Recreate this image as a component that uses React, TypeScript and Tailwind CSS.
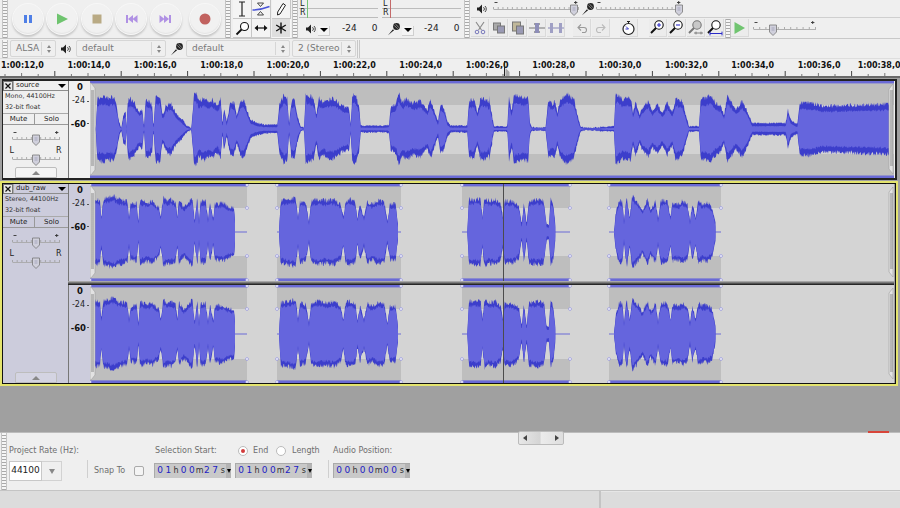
import React from "react";

const F = "font-['DejaVu_Sans',sans-serif]";

/* ---------- waveform data: [x, top y] pairs read from the picture, as 3x crop coords ---------- */
const T1A = [35,153,40,60,60,55,75,62,90,55,97,80,105,130,112,150,118,110,125,105,128,150,130,85,135,60,150,72,165,100,175,95,180,150,185,65,198,68,205,90,208,150,215,55,228,55,235,110,240,105,245,85,260,75,275,105,295,125,310,145,322,150,330,50,336,45,345,70,360,60,372,70,385,65,400,85,410,60,415,140,420,90,428,130,440,70,450,75,458,110,470,70,480,68,490,100,500,125,520,135,540,140,580,140,586,80,600,50,610,60,615,140,622,70,632,65,640,115,650,145,660,150,665,50,680,55,690,65,697,110,705,60,718,75,730,65,745,62,760,70,775,85,795,90,800,140,805,50,815,50,825,85,830,143,900,143,915,140,920,90,935,80,945,45,955,75,965,60,985,75,1010,70,1030,95,1040,65,1055,110,1062,130,1070,80,1080,90,1090,130,1100,143,1150,143,1155,70,1170,65,1180,105,1190,60,1210,65,1225,110];
const T1B = [0,60,10,120,15,145,55,145,60,60,68,100,75,50,90,55,105,60,118,55,122,130,128,148,170,148,178,65,190,80,197,65,205,105,212,70,220,60,235,47,255,65,265,110,275,145,290,150,375,145,380,45,400,65,425,60,432,105,440,70,452,110,460,90,478,70,490,100,505,80,520,105,535,75,550,105,560,60,580,70,590,110,600,145,630,145,635,65,650,60,665,55,680,75,695,85,705,110,715,55,730,75,740,95,760,70,775,100,790,135,890,135,897,95,905,125,925,140,932,75,970,75,1000,85,1200,78];
const C1 = [30,55,40,55,48,60,52,110,58,55,70,50,90,45,105,55,130,62,135,110,140,70,158,65,163,125,168,58,190,65,205,60,225,80,230,110,238,50,248,60,260,55,275,65,280,110,285,60,300,80,325,50,332,120,340,50,345,120,350,60,365,60,372,115,378,65,388,115,392,70,415,65,430,75,450,80,454,130];
const C2 = [585,150,590,60,610,55,635,50,642,110,648,60,665,65,675,120,682,60,700,55,725,60,750,55,770,70,778,110,785,60,800,55,815,65,820,115,828,70,840,110,850,60,865,70,880,60,900,60,910,120,918,70,935,70,942,130];
const C3 = [40,150,45,55,60,55,80,55,85,110,92,50,105,60,125,55,140,70,147,110,152,60,175,60,195,75,203,130,210,65,218,130,225,60,250,55,270,60,278,130,285,130,290,55,298,70,305,140];
const C4 = [480,150,485,100,495,60,505,60,510,120,518,48,527,110,535,45,555,70,565,90,580,55,590,85,605,60,612,115,620,60,640,60,650,110,655,65,675,70,685,60,700,70,708,120,715,70,725,110,733,60,745,70,760,65,775,80,785,130];

type Seg = { pts: number[]; x0: number };

function rng(seed: number) {
  let s = seed;
  return () => {
    s = (s * 1664525 + 1013904223) % 4294967296;
    return s / 4294967296;
  };
}

function wavePaths(segs: Seg[], cy: number, seed: number, body: number) {
  const r = rng(seed);
  let peak = "";
  let rms = "";
  for (const seg of segs) {
    const pts: [number, number][] = [];
    for (let i = 0; i < seg.pts.length; i += 2) {
      pts.push([seg.x0 + seg.pts[i] / 3, (153 - seg.pts[i + 1]) / 3]);
    }
    const start = pts[0][0];
    const end = pts[pts.length - 1][0];
    const up: [number, number][] = [];
    const lo: [number, number][] = [];
    const ru: [number, number][] = [];
    const rl: [number, number][] = [];
    let k = 0;
    for (let x = start; x <= end; x += 0.5) {
      while (k < pts.length - 2 && pts[k + 1][0] < x) k++;
      const [a, ha] = pts[k];
      const [b, hb] = pts[k + 1];
      const h = ha + ((hb - ha) * (x - a)) / Math.max(b - a, 0.01);
      const spread = Math.min(5, 1 + h * 0.14);
      const j1 = (r() - 0.5) * spread;
      const j2 = (r() - 0.5) * spread;
      const t = Math.min(1, h / 16);
      const f = 0.3 + (body - 0.3) * t;
      const j3 = (r() - 0.5) * Math.min(3.5, h * 0.1);
      const j4 = (r() - 0.5) * Math.min(3.5, h * 0.1);
      up.push([x, cy - h - j1]);
      lo.push([x, cy + h + j2]);
      ru.push([x, cy - h * f - j3]);
      rl.push([x, cy + h * f + j4]);
    }
    const toD = (u: [number, number][], l: [number, number][]) =>
      "M" + u.concat(l.slice().reverse()).map((p) => p[0].toFixed(1) + " " + p[1].toFixed(1)).join("L") + "Z";
    peak += toD(up, lo);
    rms += toD(ru, rl);
  }
  return { peak, rms };
}

function ClipHandle({ x, y, h, flip }: { x: number; y: number; h: number; flip?: boolean }) {
  const ticks = [];
  for (let i = 8; i < h - 8; i += 2) {
    ticks.push(<path key={i} d={`M${x + 1} ${y + i}h3`} stroke="#777" strokeWidth="0.8" />);
  }
  return (
    <g>
      <path d={flip ? `M${x} ${y + 6}l4 -5v${h - 2}l-4 -5z` : `M${x} ${y}h1l4 5v${h - 10}l-4 5h-1z`} fill="#e2e2e2" stroke="#a0a0a0" strokeWidth="0.6" />
      {ticks}
    </g>
  );
}

function Source() {
  const w = wavePaths([{ pts: T1A, x0: 85 }, { pts: T1B, x0: 490 }], 129, 7, 0.76);
  return (
    <svg className="block" width={804} height={97} viewBox="91 81 804 97">
      <rect x="91" y="81" width="804" height="97" fill="#bebebe" />
      <rect x="91" y="105" width="804" height="49" fill="#d2d2d2" />
      <rect x="91" y="81" width="804" height="2.4" fill="#6a6ad6" />
      <rect x="91" y="175.5" width="804" height="2.5" fill="#6a6ad6" />
      <path d={w.peak} fill="#3c3ecb" />
      <path d={w.rms} fill="#6565dd" />
      <ClipHandle x={91} y={83} h={92} />
      <ClipHandle x={890} y={83} h={92} flip />
    </svg>
  );
}

const CLIPS = [
  [91, 248],
  [278, 402],
  [463, 571],
  [610, 722],
];

function Channel({ top, h, cy, seed, bandTop, bandBottom }: { top: number; h: number; cy: number; seed: number; bandTop: number; bandBottom: number }) {
  const w = wavePaths(
    [
      { pts: C1, x0: 85 },
      { pts: C2, x0: 85 },
      { pts: C3, x0: 455 },
      { pts: C4, x0: 455 },
    ],
    cy,
    seed,
    0.86
  );
  return (
    <svg className="block" width={804} height={h} viewBox={`91 ${top} 804 ${h}`}>
      <rect x="91" y={top} width="804" height={h} fill="#d4d4d4" />
      {CLIPS.map(([a, b]) => (
        <g key={a}>
          <rect x={a} y={top} width={b - a} height={h} fill="#bebebe" />
          <rect x={a} y={bandTop} width={b - a} height={bandBottom - bandTop} fill="#d4d4d4" />
          <rect x={a} y={top} width={b - a} height="2.4" fill="#6a6ad6" />
          <rect x={a} y={top + h - 2.6} width={b - a} height="2.6" fill="#6a6ad6" />
          <rect x={a} y={cy - 0.5} width={b - a} height="1" fill="#6a6ad6" />
          {[a, b].map((p) =>
            [top + 1, bandTop, bandBottom, top + h - 1].map((q) => (
              <circle key={p + "-" + q} cx={p} cy={q} r="1.4" fill="#fff" stroke="#7a7ad8" strokeWidth="0.6" />
            ))
          )}
        </g>
      ))}
      <path d={w.peak} fill="#3c3ecb" />
      <path d={w.rms} fill="#6565dd" />
      <ClipHandle x={91} y={top + 2} h={h - 5} />
      <ClipHandle x={890} y={top + 2} h={h - 5} flip />
      <rect x="504" y={top} width="1" height={h} fill="#4c4c4c" />
    </svg>
  );
}

/* ---------- small parts ---------- */
function Grip({ className = "" }: { className?: string }) {
  return (
    <div className={"w-[6px] shrink-0 border-x border-[#c4c4c4] bg-[repeating-linear-gradient(0deg,#a9a9a9_0,#a9a9a9_1px,#f6f6f6_1px,#f6f6f6_3px)] " + className} />
  );
}

function Speaker({ className = "" }: { className?: string }) {
  return (
    <svg className={className} width="12" height="12" viewBox="0 0 12 12">
      <path d="M1 4.5h2l3-3v9l-3-3H1z" fill="#222" />
      <path d="M7.5 4.2a2.4 2.4 0 0 1 0 3.6M9 3a4.2 4.2 0 0 1 0 6" fill="none" stroke="#333" strokeWidth="0.9" />
    </svg>
  );
}

function Mic({ className = "", size = 14 }: { className?: string; size?: number }) {
  return (
    <svg className={className} width={size} height={size} viewBox="0 0 14 14">
      <path d="M1 13.2 6 7.2l1 1z" fill="#111" />
      <circle cx="9.5" cy="4.5" r="3.4" fill="#222" />
      <path d="M7.2 3.4l3.4 3.4M8.4 2l3.4 3.4" stroke="#ddd" strokeWidth="0.6" />
    </svg>
  );
}

function Transport({ children, className = "" }: { children: React.ReactNode; className?: string }) {
  return (
    <div className={"w-[30px] h-[30px] rounded-full bg-[#f1f1f1] shadow-[0_0_0_1px_#f7f7f7,0_2px_2px_1px_#c8c8c8,inset_0_-1px_1px_#e4e4e4] flex items-center justify-center shrink-0 " + className}>
      {children}
    </div>
  );
}

function ToolBtn({ children, active }: { children: React.ReactNode; active?: boolean }) {
  return (
    <div className={"w-[19px] h-[19px] flex items-center justify-center border-r border-b " + (active ? "bg-[#dedede] border-[#f6f6f6]" : "bg-[#f4f4f4] border-[#c6c6c6]")}>
      {children}
    </div>
  );
}

function Sel({ text, w, ml = "" }: { text: string; w: string; ml?: string }) {
  return (
    <div className={"h-[17px] flex items-center border border-[#d6d6d6] rounded-[2px] bg-[#efefef] " + w + " " + ml}>
      <span className="flex-1 pl-[5px] text-[9px] text-[#777] whitespace-nowrap">{text}</span>
      <span className="h-[13px] w-[14px] border-l border-[#d6d6d6] flex flex-col items-center justify-center gap-[2px]">
        <span className="w-0 h-0 border-x-[2.5px] border-x-transparent border-b-[3px] border-b-[#888]" />
        <span className="w-0 h-0 border-x-[2.5px] border-x-transparent border-t-[3px] border-t-[#888]" />
      </span>
    </div>
  );
}

function EditBtn({ children, w = "w-[18px]" }: { children: React.ReactNode; w?: string }) {
  return <div className={"h-[18px] flex items-center justify-center bg-[#ececec] border-r border-b border-[#dadada] mr-px " + w}>{children}</div>;
}

function Zoomer({ kind }: { kind: "in" | "out" | "sel" | "fit" }) {
  const gray = kind === "sel";
  return (
    <svg width="17" height="17" viewBox="0 0 17 17">
      <circle cx="10" cy="6" r="4.2" fill={gray ? "#c8c8c8" : "#fff"} stroke={gray ? "#777" : "#111"} strokeWidth="1.1" />
      <path d="M7 9 2 14" stroke={gray ? "#777" : "#111"} strokeWidth="1.9" />
      {kind === "in" && <path d="M8 6h4M10 4v4" stroke="#2a2ac8" strokeWidth="1.1" />}
      {kind === "out" && <path d="M8 6h4" stroke="#2a2ac8" strokeWidth="1.1" />}
      {kind === "sel" && <path d="M7 14h9M9 12.6v2.8M14 12.6v2.8" stroke="#777" strokeWidth="0.9" />}
      {kind === "fit" && <path d="M4 14.5h12M4 12.6v3.8M16 12.6v3.8" stroke="#2a2ac8" strokeWidth="1" />}
    </svg>
  );
}

function HSlider({ w, thumb, ticks, signs }: { w: number; thumb: number; ticks: number; signs?: boolean }) {
  const t = [];
  for (let i = 0; i <= ticks; i++) t.push(<path key={i} d={`M${(i * (w - 1)) / ticks + 0.5} 9v-2`} stroke="#9a9a9a" strokeWidth="0.8" />);
  return (
    <svg width={w} height="17" viewBox={`0 0 ${w} 17`} className="shrink-0 block overflow-visible">
      {signs && <path d="M1.5 2.5h3" stroke="#333" strokeWidth="0.9" />}
      {signs && <path d={`M${w - 5} 2.5h3.4M${w - 3.3} 1v3`} stroke="#333" strokeWidth="0.9" />}
      {t}
      <path d={`M0.5 9.5H${w}`} stroke="#a8a8a8" strokeWidth="0.9" />
      <path d={`M${thumb - 3.5} 5h7v7l-3.5 3.5L${thumb - 3.5} 12z`} fill="#d0d0dc" stroke="#777" strokeWidth="0.8" />
      <path d={`M${thumb - 1.5} 8h3M${thumb - 1.5} 10h3`} stroke="#8c8ca8" strokeWidth="0.6" />
    </svg>
  );
}

function Meter({ bar, w }: { bar: string; w: string }) {
  return (
    <div className={"h-[19px] flex flex-col " + w}>
      {["L", "R"].map((c) => (
        <div key={c} className="h-[9px] flex items-center border-b border-[#bcbcbc]">
          <span className="w-[6px] text-[8px] leading-[8px] text-[#222] ml-[1px]">{c}</span>
          <span className={"w-px h-[9px] ml-[1px] " + bar} />
        </div>
      ))}
    </div>
  );
}

function MeterScale({ icon, w, gap }: { icon: React.ReactNode; w: string; gap: string }) {
  return (
    <div className={"h-[19px] flex items-center relative " + w}>
      <div className="w-[18px] flex justify-end">{icon}</div>
      <div className="w-[12px] h-[10px] ml-[1px] mt-[4px] bg-[#f4f4f4] border-r border-b border-[#cfcfcf] flex items-center justify-center">
        <span className="w-0 h-0 border-x-[4px] border-x-transparent border-t-[4px] border-t-black" />
      </div>
      <span className={"text-[9px] text-[#222] " + gap}>-24</span>
      <span className="ml-[15px] text-[9px] text-[#222]">0</span>
    </div>
  );
}

function Time({ v }: { v: string[] }) {
  const units = ["h", "m", "s"];
  return (
    <div className="w-[77px] h-[15px] bg-[#c9c9c9] border-t border-l border-[#aaa] flex items-center relative pl-[1px]">
      {v.map((d, i) => (
        <span key={i} className="flex items-center">
          <span className="w-[8.2px] text-center text-[9px] text-[#2222c4]">{d[0]}</span>
          <span className="w-[8.2px] text-center text-[9px] text-[#2222c4]">{d[1]}</span>
          <span className="w-[7px] text-[8px] text-center text-[#333]">{units[i]}</span>
        </span>
      ))}
      <span className="absolute right-0 top-0 bottom-0 w-[5px] bg-[#b4b4b4] flex items-center justify-center">
        <span className="w-0 h-0 border-x-[2.5px] border-x-transparent border-t-[4px] border-t-black" />
      </span>
    </div>
  );
}

function PanelSliders() {
  return (
    <div className="flex flex-col items-center">
      <div className="mt-[5px] h-[17px]"><HSlider w={48} thumb={24} ticks={10} signs /></div>
      <div className="mt-[3px] h-[17px] relative w-[48px]">
        <HSlider w={48} thumb={24} ticks={10} />
        <span className="absolute left-[-2px] top-[-5px] text-[8px] text-[#222]">L</span>
        <span className="absolute right-[-2px] top-[-5px] text-[8px] text-[#222]">R</span>
      </div>
    </div>
  );
}

function Panel({ bg, name, info, btn }: { bg: string; name: string; info: string; btn: string }) {
  return (
    <div className={"w-[65px] shrink-0 h-full flex flex-col " + bg}>
      <div className="h-[10px] flex border-b border-[#8d8d8d]">
        <div className="w-[10px] h-[10px] border border-[#777] bg-[#e8e8e8] flex items-center justify-center">
          <svg width="6" height="6" viewBox="0 0 6 6"><path d="M0.5 0.5l5 5M5.500 0.5l-5 5" stroke="#111" strokeWidth="1.2" /></svg>
        </div>
        <div className="flex-1 flex items-center pl-[2px] pr-[2px] border-l border-[#aaa]">
          <span className="flex-1 text-[7px] leading-[9px] text-[#222]">{name}</span>
          <span className="w-0 h-0 border-x-[4.5px] border-x-transparent border-t-[4px] border-t-black" />
        </div>
      </div>
      <div className="h-[23px] pl-[2px] flex flex-col justify-center text-[6.4px] leading-[11px] text-[#333] border-b border-[#aaa]">
        <span>{info}</span>
        <span>32-bit float</span>
      </div>
      <div className="h-[11px] flex border-b border-[#999] text-[7px] text-[#222]">
        <div className="w-[32px] flex items-center justify-center border-r border-[#999]">Mute</div>
        <div className="flex-1 flex items-center justify-center">Solo</div>
      </div>
      <PanelSliders />
      <div className={"mt-auto mx-auto w-[42px] h-[11px] border border-[#bdbdbd] rounded-t-[2px] flex items-center justify-center " + btn}>
        <span className="w-0 h-0 border-x-[4px] border-x-transparent border-b-[4px] border-b-[#888]" />
      </div>
    </div>
  );
}

function VRuler({ bg, h }: { bg: string; h: string }) {
  return (
    <div className={"w-[22px] shrink-0 relative border-l border-[#777] " + bg + " " + h}>
      <span className="absolute right-[7px] top-[1px] text-[8.5px] leading-[10px] font-bold text-[#111]">0</span>
      <span className="absolute right-[5px] top-[14.5px] text-[8px] leading-[10px] text-[#222]">-24</span>
      <span className="absolute right-[4px] top-[37.5px] text-[8.5px] leading-[10px] font-bold text-[#111]">-60</span>
      <span className="absolute right-[1px] top-[20px] w-[2px] h-px bg-[#555]" />
      <span className="absolute right-[1px] top-[42px] w-[2px] h-px bg-[#555]" />
    </div>
  );
}

const LABELS = ["1:00:12,0", "1:00:14,0", "1:00:16,0", "1:00:18,0", "1:00:20,0", "1:00:22,0", "1:00:24,0", "1:00:26,0", "1:00:28,0", "1:00:30,0", "1:00:32,0", "1:00:34,0", "1:00:36,0"];

function RulerTicks() {
  const t = [];
  for (let i = 0; i < 56; i++) {
    const x = 5 + i * 16.6;
    const major = i % 4 === 3;
    const mid = i % 2 === 1;
    t.push(<path key={i} d={`M${x.toFixed(1)} ${major ? 12 : mid ? 14 : 15}V17`} stroke="#444" strokeWidth={major ? 1 : 0.7} />);
  }
  return (
    <svg className="absolute left-0 top-0" width="900" height="19" viewBox="0 0 900 19">
      {t}
      <path d="M504.5 2v15" stroke="#222" strokeWidth="1" />
      <path d="M505.5 17v-8l4 4v4z" fill="#aaa" />
    </svg>
  );
}

export default function App() {
  return (
    <div className={"relative w-[900px] h-[508px] overflow-hidden flex flex-col bg-[#efefef] " + F}>
      {/* upper toolbars */}
      <div className="h-[39px] shrink-0 flex border-b border-[#c8c8c8]">
        <Grip className="ml-[2px] h-[38px]" />
        <div className="w-[217px] flex items-center pl-[5px] gap-[4.4px]">
          <Transport>
            <svg width="12" height="12" viewBox="0 0 12 12"><path d="M2 2h3v8H2zM7 2h3v8H7z" fill="#4f7fe6" /></svg>
          </Transport>
          <Transport>
            <svg width="14" height="14" viewBox="0 0 14 14"><path d="M2 1.5 13 7 2 12.5z" fill="#6fc46f" /></svg>
          </Transport>
          <Transport>
            <svg width="12" height="12" viewBox="0 0 12 12"><path d="M1.500 1.500h9v9h-9z" fill="#b9aa84" /></svg>
          </Transport>
          <Transport>
            <svg width="13" height="12" viewBox="0 0 13 12"><path d="M1 2h2v8H1zM3 6l5-4v8zM7.500 6l5-4v8z" fill="#b091e4" /></svg>
          </Transport>
          <Transport>
            <svg width="13" height="12" viewBox="0 0 13 12"><path d="M10 2h2v8h-2zM10 6 5 2v8zM5.500 6l-5-4v8z" fill="#b091e4" /></svg>
          </Transport>
          <Transport className="ml-[5px]">
            <svg width="14" height="14" viewBox="0 0 14 14"><circle cx="7" cy="7" r="5.500" fill="#c1625f" /></svg>
          </Transport>
        </div>
        <Grip className="h-[38px]" />
        <div className="w-[58px] ml-[2px] grid grid-cols-3 content-start">
          <ToolBtn><svg width="10" height="16" viewBox="0 0 10 16"><path d="M2 1h6M2 15h6M5 1v14" stroke="#222" strokeWidth="1.2" /></svg></ToolBtn>
          <ToolBtn>
            <svg width="18" height="16" viewBox="0 0 18 16"><path d="M5.500 2h6L8.500 5.500zM5.500 14h6L8.500 10.500z" fill="none" stroke="#333" strokeWidth="0.9" /><path d="M0.500 9C6 9 11 8 17.500 5.500" stroke="#4a55d8" strokeWidth="1.6" fill="none" /></svg>
          </ToolBtn>
          <ToolBtn><svg width="12" height="14" viewBox="0 0 12 14"><path d="M8 1.500l2.500 1.700L5 12l-2.500 1 .2-3z" fill="#fff" stroke="#222" strokeWidth="1" /></svg></ToolBtn>
          <ToolBtn><svg width="15" height="15" viewBox="0 0 15 15"><circle cx="9.500" cy="5.500" r="4" fill="#fff" stroke="#111" strokeWidth="1.100" /><path d="M6.500 8.500l-5 5" stroke="#111" strokeWidth="1.800" /></svg></ToolBtn>
          <ToolBtn><svg width="14" height="8" viewBox="0 0 14 8"><path d="M3 4h8" stroke="#111" strokeWidth="1.200" /><path d="M0.500 4 4 1v6zM13.500 4 10 1v6z" fill="#111" /></svg></ToolBtn>
          <ToolBtn active><svg width="12" height="12" viewBox="0 0 12 12"><path d="M6 0.500v11M1.200 3l9.600 6M10.800 3l-9.600 6" stroke="#111" strokeWidth="1.400" /></svg></ToolBtn>
        </div>
        <Grip className="h-[38px] ml-[1px]" />
        <div className="w-[162px] ml-[1px]">
          <div className="flex h-[19px]">
            <Meter bar="bg-[#74c474]" w="w-[79px] mr-[4px]" />
            <Meter bar="bg-[#c46a6a]" w="w-[79px]" />
          </div>
          <div className="flex">
            <MeterScale icon={<Speaker />} w="w-[84px]" gap="ml-[12px]" />
            <MeterScale icon={<Mic />} w="w-[78px]" gap="ml-[10px]" />
          </div>
        </div>
        <Grip className="h-[38px] ml-[3px]" />
        <div className="flex-1 min-w-0 ml-[1px]">
          <div className="h-[18px] flex items-center border-b border-[#cfcfcf]">
            <Speaker className="ml-[5px]" />
            <div className="ml-[5px]"><HSlider w={86} thumb={81} ticks={18} signs /></div>
            <Mic className="ml-[2px]" />
            <div className="ml-[1px]"><HSlider w={86} thumb={83} ticks={18} signs /></div>
          </div>
          <div className="flex items-center h-[20px]">
            <EditBtn>
              <svg width="14" height="14" viewBox="0 0 14 14"><path d="M3 1l5.500 8M11 1 5.500 9" stroke="#888" strokeWidth="1.100" /><circle cx="4" cy="11" r="1.800" fill="none" stroke="#7777bb" /><circle cx="10" cy="11" r="1.800" fill="none" stroke="#7777bb" /></svg>
            </EditBtn>
            <EditBtn>
              <svg width="14" height="14" viewBox="0 0 14 14"><rect x="1.500" y="2" width="7" height="7" fill="#aaa" stroke="#777" /><rect x="5.500" y="5" width="7" height="7" fill="#9a9ab4" stroke="#777" /></svg>
            </EditBtn>
            <EditBtn>
              <svg width="14" height="15" viewBox="0 0 14 15"><rect x="1.500" y="2" width="8" height="9" fill="#c0b89a" stroke="#777" /><rect x="5.500" y="6" width="7" height="8" fill="#9a9ab4" stroke="#777" /></svg>
            </EditBtn>
            <EditBtn>
              <svg width="16" height="14" viewBox="0 0 16 14"><path d="M0 7h16" stroke="#777" /><path d="M5 3h1M5 11h1M10 3h1M10 11h1" stroke="#555" /><rect x="6" y="2" width="4" height="10" fill="#8e8eb8" /></svg>
            </EditBtn>
            <EditBtn>
              <svg width="16" height="14" viewBox="0 0 16 14"><path d="M0 7h16" stroke="#8888b8" /><rect x="2" y="2" width="3" height="10" fill="#9f9fc4" /><rect x="11" y="2" width="3" height="10" fill="#9f9fc4" /></svg>
            </EditBtn>
            <div className="w-[7px]" />
            <EditBtn>
              <svg width="12" height="12" viewBox="0 0 12 12"><path d="M2.500 5.500H8a2.500 2.500 0 0 1 0 5H6" fill="none" stroke="#999" strokeWidth="1.100" /><path d="M5 2.500l-3 3 3 3" fill="none" stroke="#999" strokeWidth="1.100" /></svg>
            </EditBtn>
            <EditBtn>
              <svg width="12" height="12" viewBox="0 0 12 12"><path d="M9.500 5.500H4a2.500 2.500 0 0 0 0 5h2" fill="none" stroke="#bbb" strokeWidth="1.100" /><path d="M7 2.500l3 3-3 3" fill="none" stroke="#bbb" strokeWidth="1.100" /></svg>
            </EditBtn>
            <div className="w-[9px]" />
            <EditBtn>
              <svg width="15" height="16" viewBox="0 0 15 16"><circle cx="7.500" cy="9" r="5.500" fill="#fff" stroke="#222" strokeWidth="1.200" /><path d="M6 1.500h3M7.500 1.500v2" stroke="#222" /><path d="M7.500 9 5 6.500M4.500 9h3" stroke="#3a3ac8" /></svg>
            </EditBtn>
            <div className="w-[10px]" />
            <EditBtn><Zoomer kind="in" /></EditBtn>
            <EditBtn><Zoomer kind="out" /></EditBtn>
            <EditBtn><Zoomer kind="sel" /></EditBtn>
            <EditBtn><Zoomer kind="fit" /></EditBtn>
            <Grip className="h-[19px]" />
            <EditBtn w="w-[18px]">
              <svg width="13" height="14" viewBox="0 0 13 14"><path d="M1.500 1 12 7 1.500 13z" fill="#70c470" /></svg>
            </EditBtn>
            <div className="ml-[3px]"><HSlider w={63} thumb={20} ticks={10} signs /></div>
          </div>
        </div>
      </div>

      {/* device toolbar */}
      <div className="h-[19px] shrink-0 flex items-center">
        <Grip className="ml-[2px] h-[18px]" />
        <Sel text="ALSA" w="w-[46px]" ml="ml-[2px]" />
        <Speaker className="ml-[4px]" />
        <Sel text="default" w="w-[90px]" ml="ml-[4px]" />
        <Mic className="ml-[4px]" />
        <Sel text="default" w="w-[104px]" ml="ml-[2px]" />
        <Sel text="2 (Stereo" w="w-[64px]" ml="ml-[2px]" />
        <div className="w-px h-[18px] bg-[#c8c8c8] ml-[1px]" />
        <div className="w-px h-[18px] bg-[#c8c8c8] ml-[1px]" />
      </div>

      {/* time ruler */}
      <div className="h-[20px] shrink-0 relative border-t border-[#dedede] border-b-2 border-b-[#6a6a6a]">
        <RulerTicks />
        <div className="flex pl-[1px] pt-[2px] text-[8px] leading-[10px] font-bold text-[#111] whitespace-nowrap">
          {LABELS.map((l) => (
            <span key={l} className="w-[66.4px] shrink-0">{l}</span>
          ))}
          <span className="shrink-0 ml-[-6.400px]">1:00:38,0</span>
        </div>
      </div>

      {/* tracks */}
      <div className="flex-1 min-h-0 bg-[#a0a0a0] flex flex-col">
        <div className="ml-[2px] mr-[3px] mt-[1px] border-2 border-[#222] border-l border-r-2 flex h-[101px] bg-[#efefef]">
          <Panel bg="bg-[#efefef]" name="source" info="Mono, 44100Hz" btn="bg-[#f4f4f4]" />
          <VRuler bg="bg-[#f0f0f0]" h="h-full" />
          <Source />
        </div>
        <div className="mt-[1px] mr-[2px] border-2 border-[#e4e46e] h-[205px]">
          <div className="border border-[#111] flex h-full">
            <Panel bg="bg-[#ccccdc]" name="dub_raw" info="Stereo, 44100Hz" btn="bg-[#d4d4e2]" />
            <div className="flex flex-col">
              <div className="flex h-[97px]">
                <VRuler bg="bg-[#ccccdc]" h="h-full" />
                <Channel top={183} h={97} cy={231} seed={11} bandTop={207} bandBottom={255} />
              </div>
              <div className="h-[4px] bg-[linear-gradient(#bbb,#111)]" />
              <div className="flex h-[98px]">
                <VRuler bg="bg-[#ccccdc]" h="h-full" />
                <Channel top={284} h={98} cy={333} seed={29} bandTop={308} bandBottom={358} />
              </div>
            </div>
          </div>
        </div>
      </div>

      {/* selection bar */}
      <div className="h-[58px] shrink-0 flex border-t border-[#bcbcbc] bg-[#efefef]">
        <Grip className="ml-[1px] h-[57px]" />
        <div className="w-[80px] pl-[2px] pt-[13px]">
          <div className="text-[8px] leading-[10px] text-[#6e6e6e] whitespace-nowrap">Project Rate (Hz):</div>
          <div className="mt-[5px] flex h-[20px] w-[53px]">
            <div className="w-[33px] bg-white border border-[#c8c8c8] flex items-center justify-center text-[9px] text-[#222]">44100</div>
            <div className="flex-1 border border-l-0 border-[#d2d2d2] flex items-center justify-center">
              <span className="w-0 h-0 border-x-[3px] border-x-transparent border-t-[5px] border-t-[#888]" />
            </div>
          </div>
        </div>
        <div className="w-px h-[18px] bg-[#cfcfcf] mt-[27px]" />
        <div className="ml-[6px] mt-[33px] h-[10px] flex items-center">
          <span className="text-[8px] text-[#6e6e6e]">Snap To</span>
          <span className="ml-[9px] w-[10px] h-[10px] rounded-[2px] border border-[#aaa] bg-[#f4f4f4]" />
        </div>
        <div className="ml-[11px] pt-[13px] w-[172px]">
          <div className="flex items-center h-[10px] text-[8px] text-[#6e6e6e]">
            <span className="w-[83px]">Selection Start:</span>
            <span className="w-[10px] h-[10px] rounded-full border border-[#bbb] bg-white flex items-center justify-center">
              <span className="w-[4px] h-[4px] rounded-full bg-[#d23c3c]" />
            </span>
            <span className="ml-[5px] w-[23px]">End</span>
            <span className="w-[10px] h-[10px] rounded-full border border-[#bbb] bg-white" />
            <span className="ml-[6px]">Length</span>
          </div>
          <div className="mt-[7px] flex gap-[4px] -ml-[1px]">
            <Time v={["01", "00", "27"]} />
            <Time v={["01", "00", "27"]} />
          </div>
        </div>
        <div className="w-px h-[18px] bg-[#cfcfcf] mt-[27px] ml-[1px]" />
        <div className="ml-[4px] pt-[13px]">
          <div className="text-[8px] leading-[10px] text-[#6e6e6e] whitespace-nowrap">Audio Position:</div>
          <div className="mt-[7px]"><Time v={["00", "00", "00"]} /></div>
        </div>
      </div>

      {/* status bar */}
      <div className="h-[18px] shrink-0 flex border-t border-[#c4c4c4] bg-[#dcdcdc]">
        <div className="w-[601px] border-r-2 border-[#c4c4c4]" />
        <div className="flex-1 border-t border-[#e6e6e6]" />
      </div>

      {/* overlays */}
      <div className="absolute left-[518px] top-[431px] w-[46px] h-[14px] border border-[#bbb] rounded-[2px] bg-[linear-gradient(90deg,#e8e8e8,#d4d4d4_48%,#ececec_50%,#dedede)] flex items-center justify-between px-[4px]">
        <span className="w-0 h-0 border-y-[3.500px] border-y-transparent border-r-[4px] border-r-[#444]" />
        <span className="w-0 h-0 border-y-[3.500px] border-y-transparent border-l-[4px] border-l-[#444]" />
      </div>
      <div className="absolute left-[868px] top-[431px] w-[21px] h-[2px] bg-[#d8453a]" />
    </div>
  );
}
